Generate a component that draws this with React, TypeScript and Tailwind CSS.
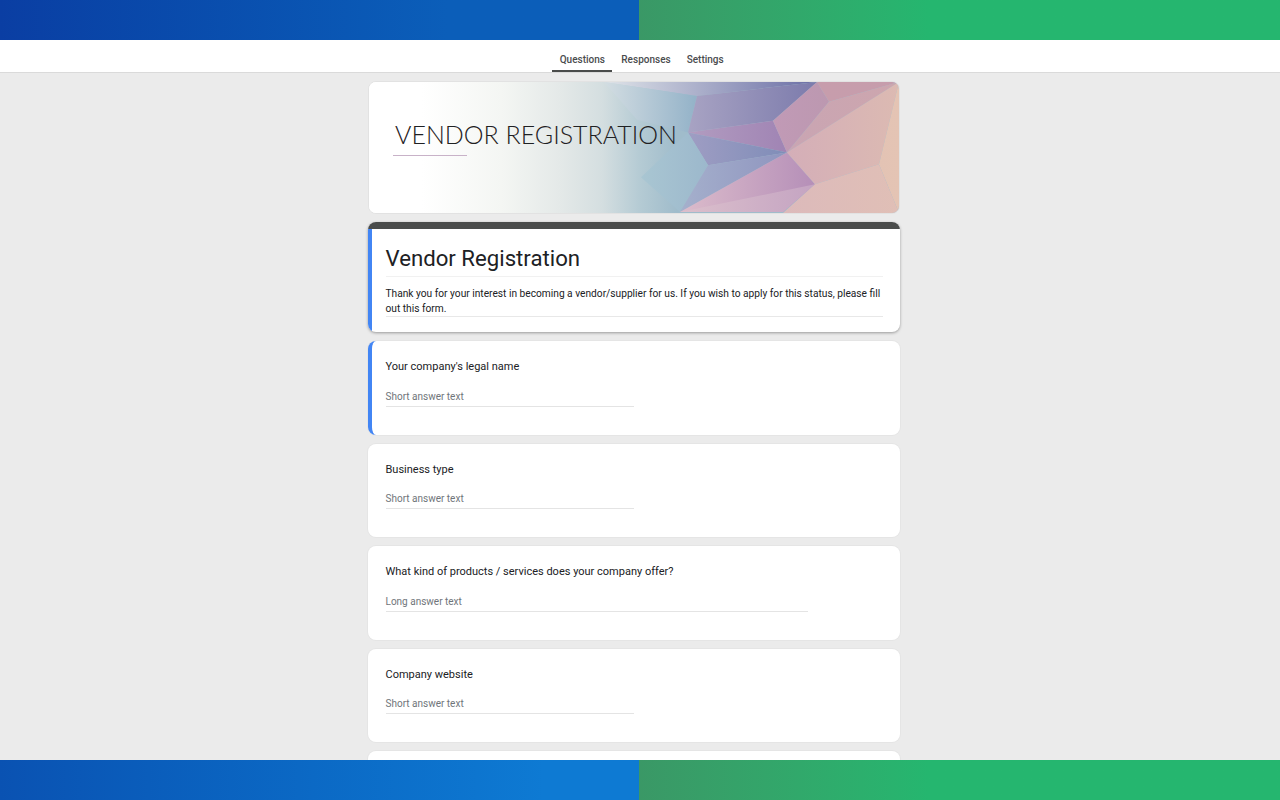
const questions = [
  { title: "Your company's legal name", hint: 'Short answer text', long: false, active: true },
  { title: 'Business type', hint: 'Short answer text', long: false, active: false },
  { title: 'What kind of products / services does your company offer?', hint: 'Long answer text', long: true, active: false },
  { title: 'Company website', hint: 'Short answer text', long: false, active: false },
];

// banner artwork: points, left colour, right colour
const facets: [string, string, string][] = [
  ['235,0 448,0 328,14', '#dfe4e8', '#6a6da5'],
  ['235,0 328,14 319,51 268,38', '#d3dde2', '#93b2c8'],
  ['328,14 448,0 404,39 319,51', '#a8a3c3', '#7c7bac'],
  ['319,51 404,39 418,71', '#b29cc0', '#a084b4'],
  ['319,51 418,71 339,84', '#9f9dc3', '#7f8db8'],
  ['319,51 339,84 311,131 272,96', '#a9c6d2', '#9cb8cc'],
  ['339,84 418,71 311,131', '#a5b0cc', '#8f95bf'],
  ['311,131 418,71 446,103 414,131', '#dcbccb', '#b58fb8'],
  ['311,131 446,103 414,131', '#dcc0cc', '#c4a4c2'],
  ['448,0 460,20 418,71 404,39', '#c19ab6', '#bc98b0'],
  ['448,0 530,0 460,20', '#c79dac', '#c69dac'],
  ['460,20 530,0 418,71', '#c9a5b3', '#cda6ae'],
  ['418,71 530,0 510,83 446,103', '#d4aeb8', '#dcbab2'],
  ['530,0 530,132 510,83', '#e3c3b4', '#e4c4b4'],
  ['446,103 510,83 530,132 414,132', '#dcbabb', '#e0bfb6'],
];

function Banner() {
  return (
    <div className="relative h-[133px] shrink-0 overflow-hidden rounded-lg border border-[#e2e2e2] bg-white">
      <svg className="absolute inset-0 h-full w-full" viewBox="0 0 530 132" preserveAspectRatio="none">
        <defs>
          <linearGradient id="fade" x1="0" x2="1" y1="0" y2="0">
            <stop offset="0.1" stopColor="#ffffff" />
            <stop offset="0.25" stopColor="#f4f6f3" />
            <stop offset="0.36" stopColor="#e4e9e8" />
            <stop offset="0.44" stopColor="#d4dee0" />
            <stop offset="0.51" stopColor="#b5cbd4" />
            <stop offset="0.58" stopColor="#a0bccb" />
          </linearGradient>
          {facets.map(([points, from, to], i) => (
            <linearGradient key={points} id={`facet${i}`} x1="0" x2="1" y1="0" y2="0">
              <stop offset="0" stopColor={from} />
              <stop offset="1" stopColor={to} />
            </linearGradient>
          ))}
        </defs>
        <rect width="530" height="132" fill="url(#fade)" />
        {facets.map(([points], i) => (
          <polygon key={points} points={points} fill={`url(#facet${i})`} />
        ))}
      </svg>
      <div className="relative pl-[26px] pt-[35px] font-['Lato',sans-serif] text-[25px] font-light leading-[34px] text-[#1f2123]">
        VENDOR REGISTRATION
      </div>
      <div className="relative ml-[24px] mt-[4px] h-px w-[74px] bg-[#c8b2c8]" />
    </div>
  );
}

function Header() {
  return (
    <div className="shrink-0 overflow-hidden rounded-lg bg-white shadow-[0_1px_3px_rgba(0,0,0,0.35)]">
      <div className="h-[7px] bg-[#4a4c4b]" />
      <div className="h-[103px] border-l-4 border-[#4285f4] pl-[13.5px] pr-[17px]">
        <h1 className="h-[48px] border-b border-[#f1f1f1] pt-[12px] text-[22.2px] leading-[34px] text-[#202124]">
          Vendor Registration
        </h1>
        <p className="border-b border-[#e8e8e8] pt-[9px] text-[10.2px] leading-[15px] text-[#202124]">
          Thank you for your interest in becoming a vendor/supplier for us. If you wish to apply for this status, please fill out this form.
        </p>
      </div>
    </div>
  );
}

function Question({ title, hint, long, active }: { title: string; hint: string; long: boolean; active: boolean }) {
  return (
    <div
      className={
        active
          ? 'h-[94px] shrink-0 rounded-lg border-l-4 border-[#4285f4] bg-white pl-[13.5px] pt-[18px] shadow-[0_0_0_1px_#e5e5e5]'
          : long
            ? 'h-[94px] shrink-0 rounded-lg bg-white pl-[17.5px] pt-[18px] shadow-[0_0_0_1px_#e5e5e5]'
            : 'h-[93px] shrink-0 rounded-lg bg-white pl-[17.5px] pt-[18px] shadow-[0_0_0_1px_#e5e5e5]'
      }
    >
      <div className="text-[11px] leading-4 text-[#202124]">{title}</div>
      <div
        className={
          long
            ? 'mt-[14px] h-[18px] w-[422.5px] border-b border-[#e4e4e4] text-[10px] leading-4 text-[#70757a]'
            : active
              ? 'mt-[14px] h-[18px] w-[248.5px] border-b border-[#e4e4e4] text-[10px] leading-4 text-[#70757a]'
              : 'mt-[13px] h-[18px] w-[248.5px] border-b border-[#e4e4e4] text-[10px] leading-4 text-[#70757a]'
        }
      >
        {hint}
      </div>
    </div>
  );
}

function Band({ blue }: { blue: string }) {
  return (
    <div className="grid h-10 shrink-0 grid-cols-[639px_1fr]">
      <div className={blue} />
      <div className="bg-gradient-to-r from-[#3a9866] to-[#25b66f] to-[45%]" />
    </div>
  );
}

export default function App() {
  return (
    <div className="flex h-screen flex-col overflow-hidden bg-[#ebebeb] font-['Roboto',sans-serif]">
      <Band blue="bg-gradient-to-r from-[#0a3ea3] to-[#0b5eb9] to-[70%]" />
      <nav className="flex h-[33px] shrink-0 items-end justify-center gap-[2px] border-b border-[#dadada] bg-white pl-[3px] text-[10px] font-medium leading-4 text-[#4a4c4e]">
        <div className="h-[32px] w-[60px] border-b-2 border-[#4a4c4b] pt-[12px] text-center">Questions</div>
        <div className="h-[32px] px-[7px] pt-[12px] text-center">Responses</div>
        <div className="h-[32px] px-[7px] pt-[12px] text-center">Settings</div>
      </nav>
      <main className="flex min-h-0 flex-1 justify-center overflow-hidden pr-3 pt-2">
        <div className="flex w-[532px] shrink-0 flex-col gap-[9px]">
          <div className="-mb-px">
            <Banner />
          </div>
          <Header />
          {questions.map((q) => (
            <Question key={q.title} {...q} />
          ))}
          <div className="h-[93px] shrink-0 rounded-lg bg-white shadow-[0_0_0_1px_#e5e5e5]" />
        </div>
      </main>
      <Band blue="bg-gradient-to-r from-[#0a52b2] to-[#0e7ad3] to-[85%]" />
    </div>
  );
}
